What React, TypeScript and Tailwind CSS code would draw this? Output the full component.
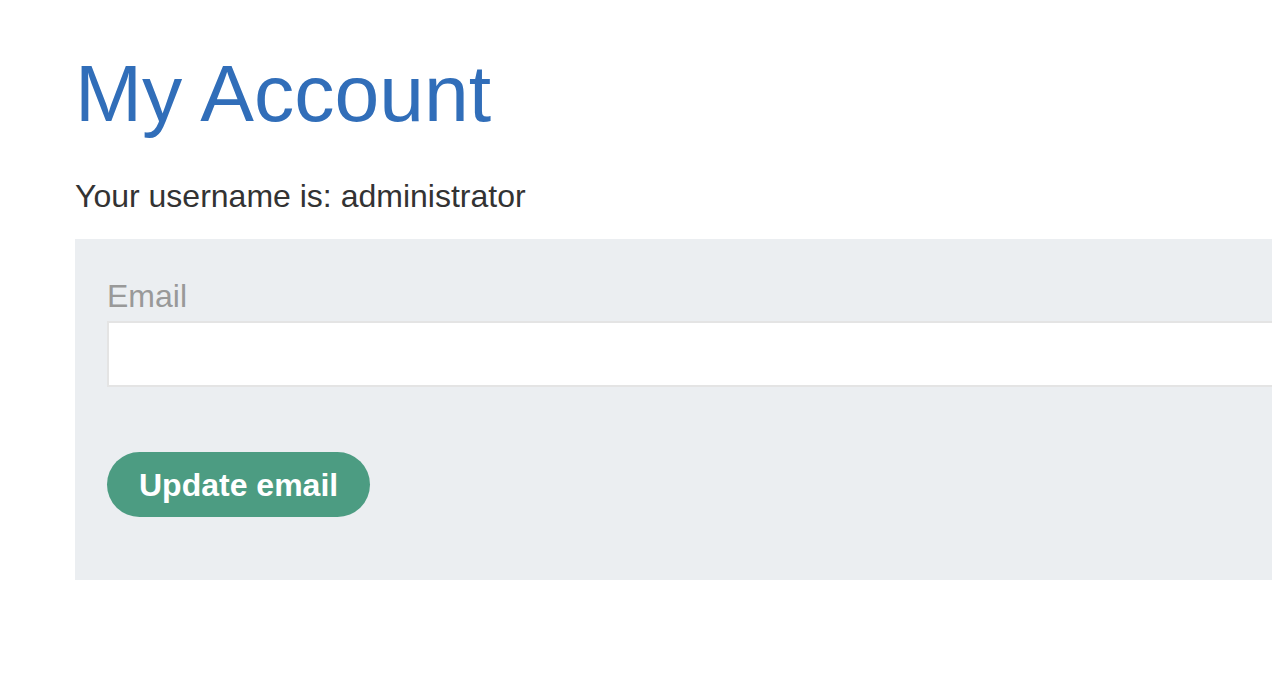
export default function App() {
  return (
    <div className="w-[1272px] h-[680px] overflow-hidden bg-white font-['Liberation_Sans',Arial,sans-serif]">
      <div className="pl-[75px]">
        <h1 className="mt-[53px] text-[80.5px] leading-[80px] text-[#316eb9] font-normal">My Account</h1>
        <p className="mt-[47px] text-[32px] leading-[32px] text-[#333333]">Your username is: administrator</p>
        <form className="mt-[27px] w-[1400px] bg-[#ebeef1] pl-[32px] pt-[41px] pb-[63px]" onSubmit={(e) => e.preventDefault()}>
          <label className="block text-[32px] leading-[32px] text-[#999999]">Email</label>
          <input
            type="email"
            name="email"
            className="mt-[9px] block w-full h-[66px] bg-white border-2 border-[#e4e4e4] focus:outline-none"
          />
          <button className="mt-[65px] h-[65px] px-[32px] rounded-full bg-[#4c9c82] text-white text-[32px] font-bold leading-none">
            Update email
          </button>
        </form>
      </div>
    </div>
  )
}
